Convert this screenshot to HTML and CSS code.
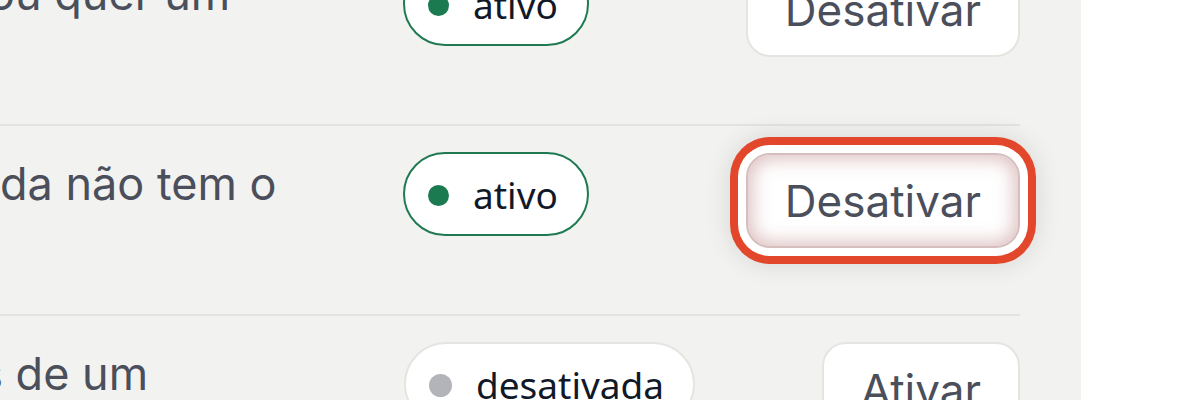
FILE: index.html
```html
<!DOCTYPE html>
<html lang="pt">
<head>
<meta charset="utf-8">
<title>Extensões</title>
<link rel="stylesheet" href="styles.css">
</head>
<body>
<div class="panel">
  <ul class="list">
    <li class="row">
      <p class="desc desc-first">ou quer um</p>
      <span class="badge badge-on"><span class="dot"></span>ativo</span>
      <button class="btn" type="button">Desativar</button>
    </li>
    <li class="row">
      <p class="desc">da não tem o</p>
      <span class="badge badge-on"><span class="dot"></span>ativo</span>
      <button class="btn btn-focus" type="button">Desativar</button>
    </li>
    <li class="row">
      <p class="desc desc-third">sites de um</p>
      <span class="badge badge-off"><span class="dot"></span>desativada</span>
      <button class="btn" type="button">Ativar</button>
    </li>
  </ul>
</div>
</body>
</html>
```
FILE: styles.css
```css
* { box-sizing: border-box; }

html, body {
  margin: 0;
  padding: 0;
  background: #ffffff;
}

body {
  width: 1200px;
  height: 400px;
  overflow: hidden;
  font-family: "Inter", "Liberation Sans", sans-serif;
}

.panel {
  width: 1081px;
  height: 400px;
  background: #f2f2f0;
  padding-right: 61px;
  overflow: hidden;
}

.list {
  list-style: none;
  margin: -64px 0 0 0;
  padding: 0;
}

.row {
  display: grid;
  grid-template-columns: 403px auto 1fr;
  align-items: start;
  height: 190px;
  padding-top: 26px;
  border-bottom: 2px solid #e3e3df;
}

.desc {
  margin: 0;
  font-size: 45px;
  line-height: 64px;
  color: #4a4f5b;
  white-space: nowrap;
}

.desc-first { text-indent: -12px; }
.desc-third { text-indent: -96px; }

.badge {
  display: inline-flex;
  align-items: center;
  height: 84px;
  padding: 0 29px 0 23px;
  border-radius: 42px;
  background: #ffffff;
  font-family: "Noto Sans", "Open Sans", sans-serif;
  font-size: 37px;
  color: #111827;
  gap: 24px;
}

.badge-on {
  border: 2.5px solid #1f7a52;
}

.badge-off {
  border: 2px solid #e4e4e0;
  margin-left: 1px;
}

.dot {
  width: 21px;
  height: 21px;
  border-radius: 50%;
  background: #1b7a4f;
  margin-top: 2px;
}

.badge-off .dot {
  background: #b3b3ba;
  width: 23px;
  height: 23px;
}

.btn {
  justify-self: end;
  height: 95px;
  padding: 0 37px;
  margin-top: 0;
  border: 2px solid #e4e4e0;
  border-radius: 24px;
  background: #ffffff;
  font-family: "Inter", "Liberation Sans", sans-serif;
  font-size: 44px;
  color: #4a4f5b;
  cursor: pointer;
}

.btn-focus {
  margin-top: 1px;
  border-color: #d6bebe;
  box-shadow:
    inset 0 0 18px 4px rgba(190, 130, 130, 0.5),
    0 0 0 8px #ffffff,
    0 0 0 16px #e2462b,
    0 0 24px 18px rgba(0, 0, 0, 0.10);
}
```
